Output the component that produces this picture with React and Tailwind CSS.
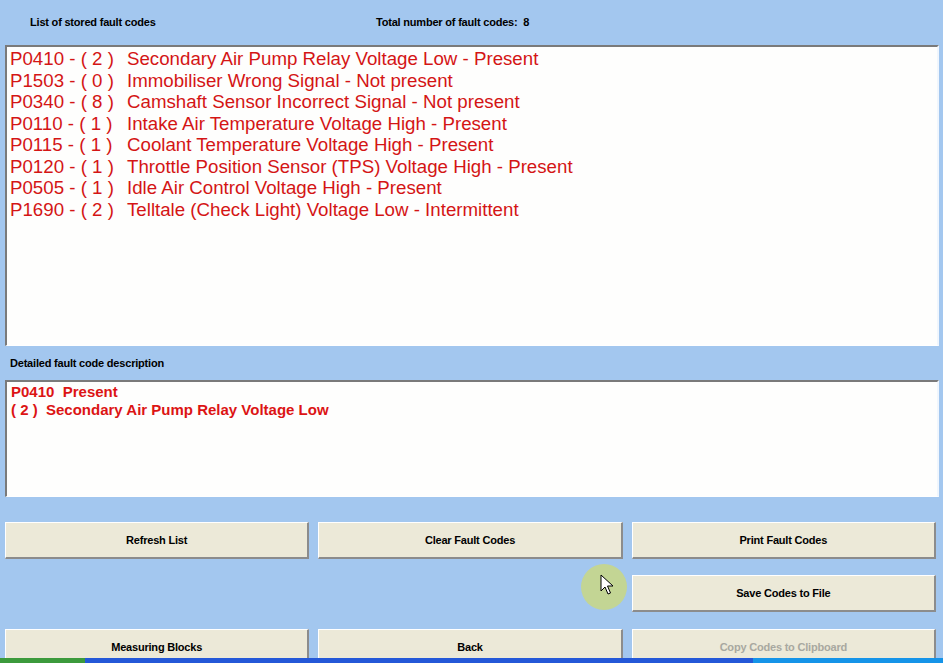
import React from "react";

const codes = [
  ["P0410", "2", "Secondary Air Pump Relay Voltage Low - Present"],
  ["P1503", "0", "Immobiliser Wrong Signal - Not present"],
  ["P0340", "8", "Camshaft Sensor Incorrect Signal - Not present"],
  ["P0110", "1", "Intake Air Temperature Voltage High - Present"],
  ["P0115", "1", "Coolant Temperature Voltage High - Present"],
  ["P0120", "1", "Throttle Position Sensor (TPS) Voltage High - Present"],
  ["P0505", "1", "Idle Air Control Voltage High - Present"],
  ["P1690", "2", "Telltale (Check Light) Voltage Low - Intermittent"],
];

function Button({ label, disabled }) {
  return (
    <button
      className={`h-[37px] w-full bg-[#ece9d8] border-t border-l border-t-white border-l-white border-b-2 border-r-2 border-b-[#8c8c8c] border-r-[#8c8c8c] text-[11px] font-bold tracking-[-0.2px] ${
        disabled ? "text-[#a8a8a0]" : "text-black"
      }`}
    >
      {label}
    </button>
  );
}

export default function App() {
  return (
    <div
      className="relative w-[943px] h-[663px] overflow-hidden bg-[#a3c7ef]"
      style={{ fontFamily: "'Liberation Sans', Arial, sans-serif" }}
    >
      {/* header labels */}
      <div className="flex h-[45px] items-center pb-[1px] text-[11px] font-bold text-black tracking-[-0.2px]">
        <div className="w-[376px] pl-[30px]">List of stored fault codes</div>
        <div>Total number of fault codes:&nbsp; 8</div>
      </div>

      {/* fault list */}
      <div className="ml-[5px] w-[934px] h-[301px] bg-[#fefefd] border-t-2 border-l-2 border-t-[#7a7a7a] border-l-[#7a7a7a] border-b border-r-2 border-b-white border-r-[#f0f6fd] pl-[3px] pt-[1px]">
        {codes.map(([code, count, text]) => (
          <div
            key={code}
            className="flex h-[21.5px] leading-[21.5px] text-[18.7px] text-[#d41515] whitespace-pre"
          >
            <span className="w-[117px] shrink-0">{`${code} - ( ${count} )`}</span>
            <span>{text}</span>
          </div>
        ))}
      </div>

      {/* description label */}
      <div className="h-[34px] flex items-center pl-[10px] text-[11px] font-bold text-black tracking-[-0.2px]">
        Detailed fault code description
      </div>

      {/* description box */}
      <div className="ml-[5px] w-[934px] h-[117px] bg-[#fefefd] border-t-2 border-l-2 border-t-[#7a7a7a] border-l-[#7a7a7a] border-b border-r-2 border-b-white border-r-[#f0f6fd] pl-[4px] pt-[1px] text-[15px] font-bold text-[#dc1414] leading-[18px]">
        <div className="whitespace-pre">P0410  Present</div>
        <div className="whitespace-pre">( 2 )  Secondary Air Pump Relay Voltage Low</div>
      </div>

      {/* buttons */}
      <div className="ml-[5px] mt-[25px] w-[931px] grid grid-cols-3 gap-x-[9px]">
        <Button label="Refresh List" />
        <Button label="Clear Fault Codes" />
        <Button label="Print Fault Codes" />
        <div className="h-[16px] col-span-3" />
        <div />
        <div />
        <Button label="Save Codes to File" />
        <div className="h-[17px] col-span-3" />
        <Button label="Measuring Blocks" />
        <Button label="Back" />
        <Button label="Copy Codes to Clipboard" disabled />
      </div>

      {/* mouse highlight + cursor */}
      <div className="absolute left-[581px] top-[564px] w-[46px] h-[46px] rounded-full bg-[#c6d68a] opacity-90" />
      <svg
        className="absolute left-[600px] top-[574px]"
        width="14"
        height="22"
        viewBox="0 0 14 22"
      >
        <path
          d="M1 1 L1 17 L5 13 L8 20 L10.5 19 L7.5 12 L13 12 Z"
          fill="white"
          stroke="black"
          strokeWidth="1"
          strokeLinejoin="round"
        />
      </svg>

      {/* taskbar strip */}
      <div className="absolute left-0 bottom-0 w-full h-[5px] flex">
        <div className="w-[85px] bg-[#3c9a3c]" />
        <div className="w-[668px] bg-[#2458d8]" />
        <div className="flex-1 bg-[#1594e8]" />
      </div>
    </div>
  );
}
